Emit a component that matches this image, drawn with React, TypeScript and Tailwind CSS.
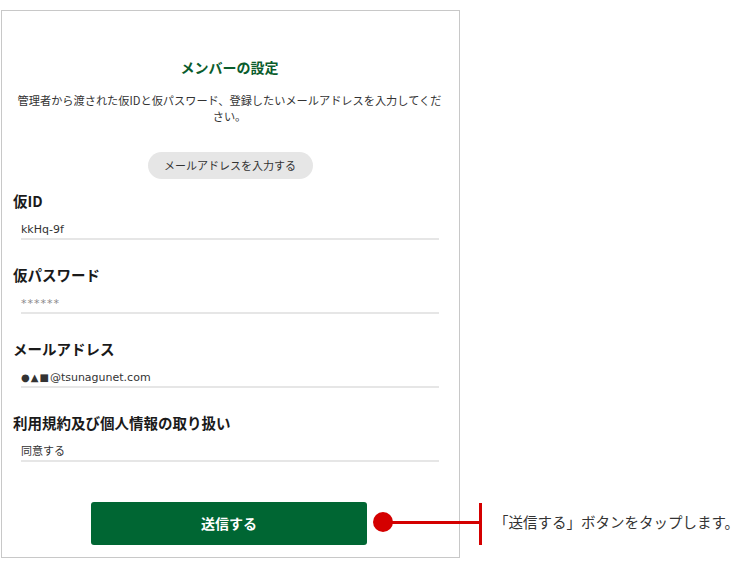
import React from "react";

const font = { fontFamily: '"Noto Sans CJK JP", "Noto Sans", sans-serif' };
const valueFont = { fontFamily: '"DejaVu Sans", "Noto Sans CJK JP", sans-serif' };

function Field({ label, children, muted }: { label: string; children: React.ReactNode; muted?: boolean }) {
  return (
    <div className="flex flex-col">
      <div className="text-[14.5px] leading-[20px] font-bold text-[#1a1a1a]">{label}</div>
      <div
        className={
          "mt-[11px] ml-[8px] w-[418px] border-b-2 border-[#e6e6e6] text-[11px] leading-[16px] " +
          (muted ? "text-[#8a8a8a] tracking-[1px]" : "text-[#333333]")
        }
        style={valueFont}
      >
        {children}
      </div>
    </div>
  );
}

export default function App() {
  return (
    <div className="relative w-[750px] h-[568px] bg-white overflow-hidden" style={font}>
      <div className="ml-[1px] mt-[10px] w-[459px] h-[548px] border border-[#c8c8c8] flex flex-col">
        <div className="mt-[46px] text-center text-[14px] leading-[20px] font-bold text-[#0a5c2c] pr-[2px]">
          メンバーの設定
        </div>
        <div className="mt-[15px] mx-auto w-[428px] text-center text-[11.2px] leading-[16px] text-[#333333] pr-[2px]">
          管理者から渡された仮IDと仮パスワード、登録したいメールアドレスを入力してください。
        </div>
        <div className="mt-[28px] flex justify-center pr-[1px]">
          <div className="w-[165px] h-[27px] rounded-full bg-[#e6e6e6] flex items-center justify-center text-[11px] text-[#333333]">
            メールアドレスを入力する
          </div>
        </div>
        <div className="mt-[12px] pl-[11px] flex flex-col gap-[25px]">
          <Field label="仮ID">kkHq-9f</Field>
          <Field label="仮パスワード" muted>
            ******
          </Field>
          <Field label="メールアドレス">
            <span className="text-[10px] tracking-[1px]">●▲■</span>@tsunagunet.com
          </Field>
          <Field label="利用規約及び個人情報の取り扱い">同意する</Field>
        </div>
        <div className="mt-[40px] ml-[89px] w-[276px] h-[43px] rounded-[3px] bg-[#006633] flex items-center justify-center text-white text-[14px] font-bold">
          送信する
        </div>
      </div>

      {/* callout */}
      <div className="absolute left-[373px] top-[512px] w-[20px] h-[20px] rounded-full bg-[#d40000]" />
      <div className="absolute left-[383px] top-[521px] w-[97px] h-[3px] bg-[#d40000]" />
      <div className="absolute left-[479px] top-[503px] w-[3px] h-[42px] bg-[#d40000]" />
      <div className="absolute left-[494px] top-[512px] text-[14.5px] leading-[20px] text-[#333333] whitespace-nowrap">
        「送信する」ボタンをタップします。
      </div>
    </div>
  );
}
